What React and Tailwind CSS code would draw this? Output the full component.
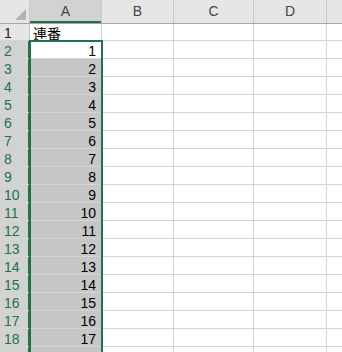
import React from "react";

const COLS = [
  { key: "A", w: "w-[72px]" },
  { key: "B", w: "w-[72px]" },
  { key: "C", w: "w-[80px]" },
  { key: "D", w: "w-[73px]" },
];

const ROWS = Array.from({ length: 19 }, (_, i) => i + 1);

function App() {
  return (
    <div
      className="relative w-[342px] h-[352px] overflow-hidden bg-white text-black"
      style={{ fontFamily: '"Liberation Sans", "Noto Sans CJK JP", sans-serif' }}
    >
      {/* column header row */}
      <div className="flex h-[24px] bg-[#e6e6e6] border-b border-[#a6a6a6]">
        <div className="relative w-[30px] shrink-0 border-r border-[#c8c8c8]">
          <div className="absolute right-[3px] bottom-[3px] w-0 h-0 border-l-[11px] border-l-transparent border-b-[11px] border-b-[#b4b4b4]" />
        </div>
        {COLS.map((c) => (
          <div
            key={c.key}
            className={`${c.w} shrink-0 flex items-center justify-center border-r border-[#c8c8c8] text-[14px] ${
              c.key === "A"
                ? "bg-[#d2d2d2] text-[#444] shadow-[inset_0_-2px_0_#217346]"
                : "text-[#444]"
            }`}
          >
            {c.key}
          </div>
        ))}
        <div className="flex-1" />
      </div>

      {ROWS.map((r) => {
        const sel = r >= 2;
        const show = r <= 18;
        return (
          <div
            key={r}
            className={`flex ${r === 1 ? "h-[17px]" : "h-[18px]"} border-b border-[#d4d4d4]`}
          >
            <div
              className={`w-[30px] shrink-0 flex items-end pl-[4px] text-[14px] leading-none border-r ${
                sel
                  ? "bg-[#d2d2d2] text-[#217346] border-[#217346] shadow-[inset_-1px_0_0_#217346]"
                  : "bg-[#e6e6e6] text-[#222] border-[#c8c8c8]"
              }`}
            >
              {show ? r : null}
            </div>
            <div
              className={`w-[72px] shrink-0 flex items-end border-r border-[#d4d4d4] text-[14px] leading-none ${
                r === 1 ? "pl-[3px] justify-start" : "pr-[5px] justify-end"
              } ${r >= 3 ? "bg-[#c6c6c6]" : ""}`}
            >
              {r === 1 ? (
                <span
                  style={{ fontFamily: '"Noto Sans CJK JP", sans-serif' }}
                  className="text-[14px] leading-none"
                >
                  連番
                </span>
              ) : show ? (
                r - 1
              ) : null}
            </div>
            <div className="w-[72px] shrink-0 border-r border-[#d4d4d4]" />
            <div className="w-[80px] shrink-0 border-r border-[#d4d4d4]" />
            <div className="w-[73px] shrink-0 border-r border-[#d4d4d4]" />
            <div className="flex-1" />
          </div>
        );
      })}

      {/* selection outline A2:A19 */}
      <div className="absolute left-[29px] top-[40px] w-[74px] h-[340px] border-2 border-[#217346] pointer-events-none" />
    </div>
  );
}

export default App;
